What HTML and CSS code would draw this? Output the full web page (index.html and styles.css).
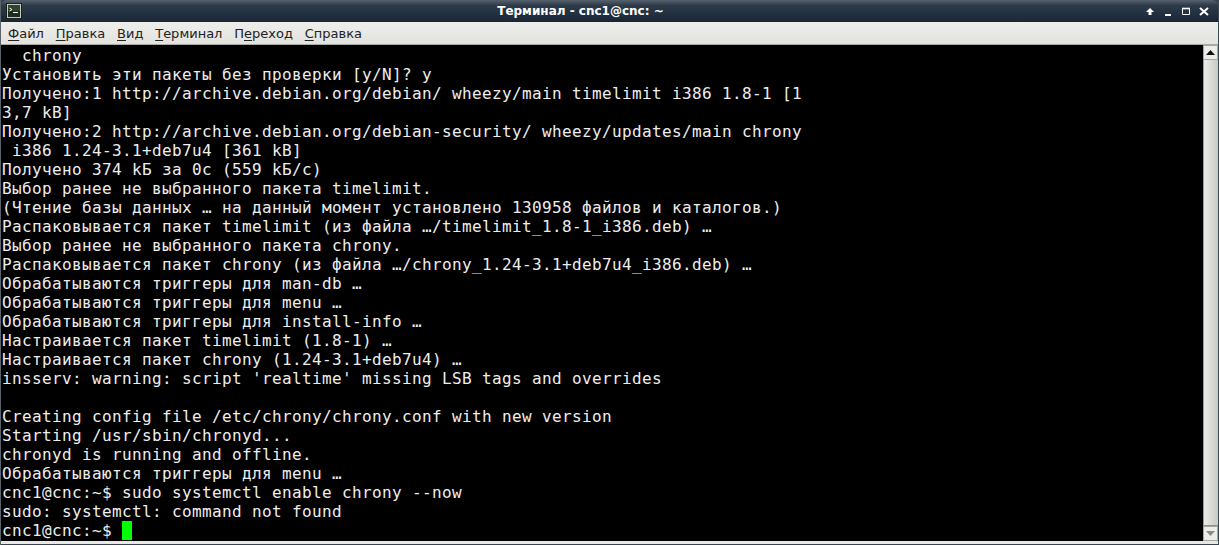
FILE: index.html
```html
<!DOCTYPE html>
<html lang="ru">
<head>
<meta charset="utf-8">
<title>Терминал</title>
<link rel="stylesheet" href="styles.css">
</head>
<body>
<div class="window">
  <header class="titlebar">
    <svg class="app-icon" width="16" height="16" viewBox="0 0 16 16"><rect x="0.5" y="0.5" width="15" height="15" fill="#c4cbbb" stroke="#1a2018"/><rect x="2" y="2" width="12" height="12" fill="#2f4532"/><rect x="2" y="8" width="12" height="6" fill="#1d2c20"/><path d="M3.5 5l2.5 1.5L3.5 8" stroke="#f0f5ea" fill="none"/><path d="M7 9.5h5" stroke="#f0f5ea"/></svg>
    <div class="title">Терминал - cnc1@cnc: ~</div>
    <div class="controls">
      <svg width="10" height="10" viewBox="0 0 10 10"><path d="M5 2l4 4H6.5v3h-3V6H1z" fill="#fff"/></svg>
      <svg width="10" height="10" viewBox="0 0 10 10"><rect x="2" y="8" width="6" height="2" fill="#fff"/></svg>
      <svg width="10" height="10" viewBox="0 0 10 10"><path d="M1.5 2.5h7v6h-7z" fill="none" stroke="#fff"/><path d="M1 2.5h8" stroke="#fff" stroke-width="1.6"/></svg>
      <svg width="10" height="10" viewBox="0 0 10 10"><path d="M1 2l8 7M9 2l-8 7" stroke="#fff" stroke-width="2"/></svg>
    </div>
  </header>
  <nav class="menubar">
    <span class="menu"><u>Ф</u>айл</span>
    <span class="menu"><u>П</u>равка</span>
    <span class="menu"><u>В</u>ид</span>
    <span class="menu"><u>Т</u>ерминал</span>
    <span class="menu">П<u>е</u>реход</span>
    <span class="menu"><u>С</u>правка</span>
  </nav>
  <main class="content">
<pre class="terminal">  chrony
Установить эти пакеты без проверки [y/N]? y
Получено:1 http://archive.debian.org/debian/ wheezy/main timelimit i386 1.8-1 [1
3,7 kB]
Получено:2 http://archive.debian.org/debian-security/ wheezy/updates/main chrony
 i386 1.24-3.1+deb7u4 [361 kB]
Получено 374 kБ за 0с (559 kБ/c)
Выбор ранее не выбранного пакета timelimit.
(Чтение базы данных … на данный момент установлено 130958 файлов и каталогов.)
Распаковывается пакет timelimit (из файла …/timelimit_1.8-1_i386.deb) …
Выбор ранее не выбранного пакета chrony.
Распаковывается пакет chrony (из файла …/chrony_1.24-3.1+deb7u4_i386.deb) …
Обрабатываются триггеры для man-db …
Обрабатываются триггеры для menu …
Обрабатываются триггеры для install-info …
Настраивается пакет timelimit (1.8-1) …
Настраивается пакет chrony (1.24-3.1+deb7u4) …
insserv: warning: script 'realtime' missing LSB tags and overrides

Creating config file /etc/chrony/chrony.conf with new version
Starting /usr/sbin/chronyd...
chronyd is running and offline.
Обрабатываются триггеры для menu …
cnc1@cnc:~$ sudo systemctl enable chrony --now
sudo: systemctl: command not found
cnc1@cnc:~$ <span class="cursor"> </span></pre>
    <div class="scrollbar">
      <div class="sb-btn"><svg width="9" height="5" viewBox="0 0 9 5"><path d="M4.5 0L9 5H0z" fill="#111"/></svg></div>
      <div class="sb-track"><div class="sb-thumb"></div></div>
      <div class="sb-btn"><svg width="9" height="5" viewBox="0 0 9 5"><path d="M4.5 5L9 0H0z" fill="#8a8a86"/></svg></div>
    </div>
  </main>
  <div class="bottom"></div>
</div>
</body>
</html>
```
FILE: styles.css
```css
html, body { margin: 0; padding: 0; width: 1219px; height: 545px; overflow: hidden; background: #3a4450; }
.window { display: flex; flex-direction: column; width: 1219px; height: 545px; box-sizing: border-box; border-left: 1px solid #5a626a; border-right: 1px solid #3b4753; }
.titlebar { height: 22px; flex: none; display: flex; align-items: center; background: linear-gradient(#57626e, #2c3a49 25%, #182637); border-radius: 6px 6px 0 0; padding: 0 0 0 5px; }
.app-icon { flex: none; }
.title { flex: 1; text-align: center; color: #fff; font: bold 12px "DejaVu Sans", sans-serif; padding-right: 6px; }
.controls { display: flex; gap: 8px; align-items: center; padding-right: 9px; }
.menubar { height: 23px; flex: none; display: flex; align-items: center; box-sizing: border-box; background: linear-gradient(#eeeeea, #e2e2de); border-bottom: 1px solid #a9a9a2; padding: 0 0 0 7px; gap: 11.8px; font: 13px "DejaVu Sans", sans-serif; color: #222; }
.menu u { text-underline-offset: 2px; }
.content { flex: 1; min-height: 0; display: flex; background: #000; }
.terminal { flex: 1; margin: 0; padding: 1px 0 0 1px; color: #eee; font: 16px/19px "DejaVu Sans Mono", monospace; letter-spacing: 0.367px; overflow: hidden; }
.cursor { display: inline-block; width: 10px; height: 19px; background: #00ff00; vertical-align: top; }
.scrollbar { width: 15px; box-sizing: border-box; flex: none; display: flex; flex-direction: column; background: #d4d4d0; }
.sb-btn { height: 15px; box-sizing: border-box; flex: none; display: flex; align-items: center; justify-content: center; background: #ecece8; border: 1px solid #a8a8a2; }
.sb-track { flex: 1; background: #e4e4e0; }
.sb-thumb { height: 100%; box-sizing: border-box; background: linear-gradient(90deg, #ecece8, #c8c8c4); border-left: 1px solid #9a9a94; border-bottom: 1px solid #8f8f88; }
.bottom { height: 3px; flex: none; background: #e8e8e4; border-bottom: 1px solid #3a4450; }
```
